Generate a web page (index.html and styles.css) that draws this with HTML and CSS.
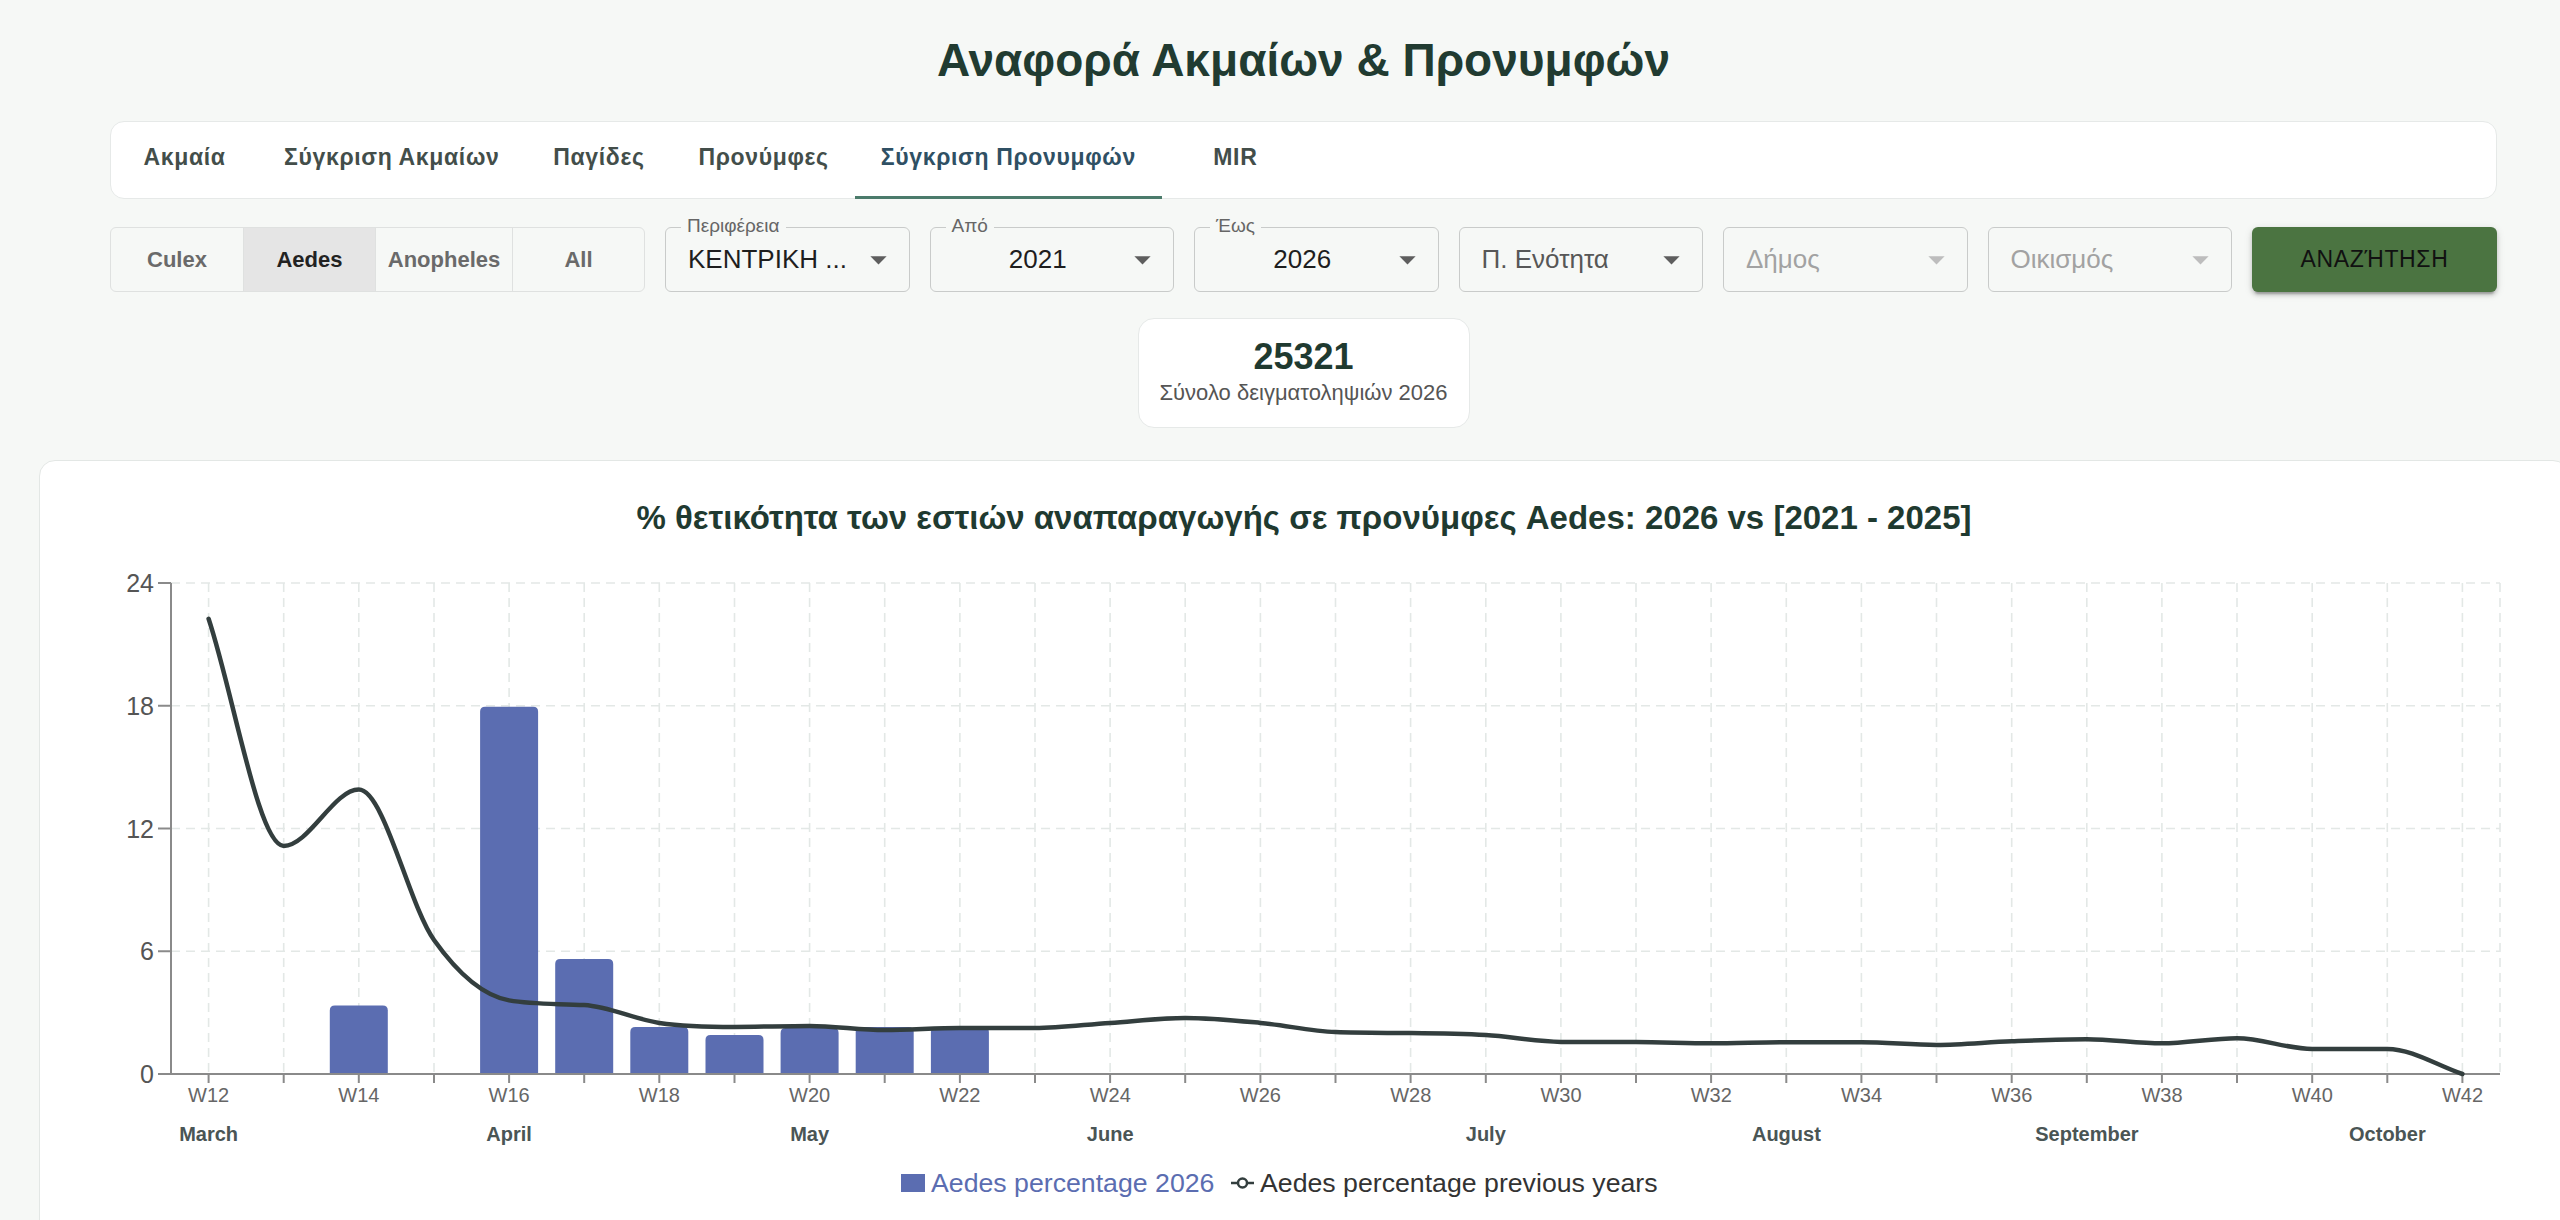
FILE: index.html
```html
<!DOCTYPE html>
<html lang="el">
<head>
<meta charset="utf-8">
<title>Αναφορά Ακμαίων &amp; Προνυμφών</title>
<link rel="stylesheet" href="styles.css">
</head>
<body>
<div class="page">
  <h1 class="page-title">Αναφορά Ακμαίων &amp; Προνυμφών</h1>

  <nav class="tabs">
    <div class="tab">Ακμαία</div>
    <div class="tab">Σύγκριση Ακμαίων</div>
    <div class="tab">Παγίδες</div>
    <div class="tab">Προνύμφες</div>
    <div class="tab active">Σύγκριση Προνυμφών</div>
    <div class="tab">MIR</div>
  </nav>

  <div class="filters">
    <div class="species">
      <div class="seg">Culex</div>
      <div class="seg selected">Aedes</div>
      <div class="seg">Anopheles</div>
      <div class="seg">All</div>
    </div>

    <div class="select">
      <span class="select-label">Περιφέρεια</span>
      <span class="select-value">ΚΕΝΤΡΙΚΗ ...</span>
      <svg class="arrow" viewBox="0 0 24 24"><path d="M7 10l5 5 5-5z"/></svg>
    </div>
    <div class="select centered">
      <span class="select-label">Από</span>
      <span class="select-value">2021</span>
      <svg class="arrow" viewBox="0 0 24 24"><path d="M7 10l5 5 5-5z"/></svg>
    </div>
    <div class="select centered">
      <span class="select-label">Έως</span>
      <span class="select-value">2026</span>
      <svg class="arrow" viewBox="0 0 24 24"><path d="M7 10l5 5 5-5z"/></svg>
    </div>
    <div class="select">
      <span class="select-value placeholder">Π. Ενότητα</span>
      <svg class="arrow" viewBox="0 0 24 24"><path d="M7 10l5 5 5-5z"/></svg>
    </div>
    <div class="select disabled">
      <span class="select-value placeholder">Δήμος</span>
      <svg class="arrow" viewBox="0 0 24 24"><path d="M7 10l5 5 5-5z"/></svg>
    </div>
    <div class="select disabled">
      <span class="select-value placeholder">Οικισμός</span>
      <svg class="arrow" viewBox="0 0 24 24"><path d="M7 10l5 5 5-5z"/></svg>
    </div>

    <button class="search" type="button">ΑΝΑΖΉΤΗΣΗ</button>
  </div>

  <div class="stats">
    <div class="stat-card">
      <div class="stat-num">25321</div>
      <div class="stat-label">Σύνολο δειγματοληψιών 2026</div>
    </div>
  </div>
</div>

<section class="chart-card">
  <h2 class="chart-title">% θετικότητα των εστιών αναπαραγωγής σε προνύμφες Aedes: 2026 vs [2021 - 2025]</h2>
  <svg id="chart" class="chart" width="2528" height="700" viewBox="0 0 2528 700">
    <g class="grid">
      <line x1="131" x2="2460" y1="23" y2="23"/>
      <line x1="131" x2="2460" y1="145.75" y2="145.75"/>
      <line x1="131" x2="2460" y1="268.5" y2="268.5"/>
      <line x1="131" x2="2460" y1="391.25" y2="391.25"/>
    </g>
    <g id="grid-v" class="grid"></g>
    <g id="bars"></g>
    <g class="axis">
      <line x1="131" x2="131" y1="23" y2="514"/>
      <line x1="118" x2="2460" y1="514" y2="514"/>
      <line x1="118" x2="131" y1="23" y2="23"/>
      <line x1="118" x2="131" y1="145.75" y2="145.75"/>
      <line x1="118" x2="131" y1="268.5" y2="268.5"/>
      <line x1="118" x2="131" y1="391.25" y2="391.25"/>
    </g>
    <g id="ticks-x" class="axis"></g>
    <path id="prev-line" class="prev-line" d=""/>

    <g class="ylab">
      <text x="114" y="32">24</text>
      <text x="114" y="154.75">18</text>
      <text x="114" y="277.5">12</text>
      <text x="114" y="400.25">6</text>
      <text x="114" y="523">0</text>
    </g>
    <g class="xlab">
      <text x="168.6" y="542">W12</text>
      <text x="318.9" y="542">W14</text>
      <text x="469.1" y="542">W16</text>
      <text x="619.4" y="542">W18</text>
      <text x="769.6" y="542">W20</text>
      <text x="919.9" y="542">W22</text>
      <text x="1070.2" y="542">W24</text>
      <text x="1220.4" y="542">W26</text>
      <text x="1370.7" y="542">W28</text>
      <text x="1521.0" y="542">W30</text>
      <text x="1671.2" y="542">W32</text>
      <text x="1821.5" y="542">W34</text>
      <text x="1971.7" y="542">W36</text>
      <text x="2122.0" y="542">W38</text>
      <text x="2272.3" y="542">W40</text>
      <text x="2422.5" y="542">W42</text>
    </g>
    <g class="month">
      <text x="168.6" y="581">March</text>
      <text x="469.1" y="581">April</text>
      <text x="769.6" y="581">May</text>
      <text x="1070.2" y="581">June</text>
      <text x="1445.8" y="581">July</text>
      <text x="1746.4" y="581">August</text>
      <text x="2046.9" y="581">September</text>
      <text x="2347.4" y="581">October</text>
    </g>
    <g class="legend">
      <rect class="bar" x="861" y="614" width="24" height="18"/>
      <text class="leg-2026" x="891" y="632">Aedes percentage 2026</text>
      <line class="leg-line" x1="1191" x2="1214" y1="623" y2="623"/>
      <circle class="leg-dot" cx="1202.5" cy="623" r="4.5"/>
      <text class="leg-prev" x="1220" y="632">Aedes percentage previous years</text>
    </g>
  </svg>
</section>

<script src="script.js"></script>
</body>
</html>
```

FILE: styles.css
```css
html {
  overflow: hidden;
}

body {
  margin: 0;
  background: #f6f8f6;
  font-family: "Liberation Sans", Arial, sans-serif;
  color: #222;
}

.page {
  margin-left: 110px;
  width: 2387px;
}

.page-title {
  margin: 33px 0 34px;
  font-size: 46px;
  line-height: 54px;
  font-weight: bold;
  text-align: center;
  color: #213b31;
}

/* Tabs */
.tabs {
  display: flex;
  height: 78px;
  box-sizing: border-box;
  background: #fff;
  border: 1px solid #e6e9e8;
  border-radius: 14px;
}

.tab {
  position: relative;
  min-width: 147px;
  padding: 0 26px 5px;
  box-sizing: border-box;
  display: flex;
  align-items: center;
  justify-content: center;
  font-size: 23px;
  font-weight: bold;
  letter-spacing: 0.65px;
  color: #434e4a;
  white-space: nowrap;
}

.tab.active {
  color: #2f5064;
}

.tab.active::after {
  content: "";
  position: absolute;
  left: 0;
  right: 0;
  bottom: -1px;
  height: 3px;
  background: #4b7b6b;
}

/* Filters */
.filters {
  display: flex;
  gap: 20px;
  margin-top: 28px;
  height: 65px;
}

.species {
  display: flex;
  width: 535px;
  flex: 0 0 535px;
  box-sizing: border-box;
  border: 1px solid #dfe1e0;
  border-radius: 6px;
  overflow: hidden;
}

.seg {
  min-width: 132px;
  padding: 0 12px;
  box-sizing: border-box;
  display: flex;
  align-items: center;
  justify-content: center;
  font-size: 22px;
  font-weight: bold;
  color: #6a6a6a;
  border-left: 1px solid #dfe1e0;
}

.seg:first-child {
  border-left: 0;
}

.seg.selected {
  background: #e5e5e5;
  color: #222;
}

.select {
  position: relative;
  flex: 1;
  display: flex;
  align-items: center;
  box-sizing: border-box;
  padding: 0 50px 0 22px;
  border: 1px solid #c9cbca;
  border-radius: 6px;
  font-size: 26px;
  color: #1e1e1e;
  white-space: nowrap;
}

.select.centered .select-value {
  flex: 1;
  text-align: center;
}

.select-label {
  position: absolute;
  left: 15px;
  top: -13px;
  padding: 0 6px;
  font-size: 19px;
  line-height: 22px;
  color: #666;
  background: #f6f8f6;
}

.select-value.placeholder {
  color: #575757;
}

.select.disabled .select-value.placeholder {
  color: #a2a2a2;
}

.arrow {
  position: absolute;
  right: 11px;
  top: 50%;
  width: 39px;
  height: 39px;
  margin-top: -20px;
  fill: #5e5e5e;
}

.select.disabled .arrow {
  fill: #bdbdbd;
}

.search {
  flex: 0 0 245px;
  height: 65px;
  border: 0;
  border-radius: 6px;
  background: #4b7441;
  color: #111;
  font-family: "Liberation Sans", Arial, sans-serif;
  font-size: 23px;
  letter-spacing: 0.65px;
  box-shadow: 0 5px 2px -3px rgba(0, 0, 0, 0.2), 0 3px 4px 0 rgba(0, 0, 0, 0.16), 0 2px 9px 0 rgba(0, 0, 0, 0.12);
}

/* Stat */
.stats {
  display: flex;
  justify-content: center;
  margin-top: 26px;
}

.stat-card {
  width: 332px;
  height: 110px;
  box-sizing: border-box;
  padding-top: 18px;
  background: #fff;
  border: 1px solid #e6e9e8;
  border-radius: 16px;
  text-align: center;
}

.stat-num {
  font-size: 36px;
  line-height: 40px;
  font-weight: bold;
  color: #1f3a30;
}

.stat-label {
  margin-top: 3px;
  font-size: 22px;
  line-height: 26px;
  color: #555;
}

/* Chart card */
.chart-card {
  margin: 32px 0 0 39px;
  width: 2530px;
  height: 820px;
  box-sizing: border-box;
  background: #fff;
  border: 1px solid #e3e7e5;
  border-radius: 16px;
}

.chart-title {
  margin: 38px 0 23px;
  font-size: 33px;
  line-height: 38px;
  font-weight: bold;
  text-align: center;
  color: #1f3a30;
}

.chart {
  display: block;
  font-family: "Liberation Sans", Arial, sans-serif;
}

.grid line {
  stroke: #e3e8e6;
  stroke-width: 1.6;
  stroke-dasharray: 9 6;
}

.axis line {
  stroke: #8a8a8a;
  stroke-width: 2;
}

.bar {
  fill: #5b6db1;
}

.prev-line {
  fill: none;
  stroke: #333e3e;
  stroke-width: 4.5;
  stroke-linejoin: round;
  stroke-linecap: round;
}

.ylab text {
  font-size: 25px;
  fill: #555;
  text-anchor: end;
}

.xlab text {
  font-size: 20px;
  fill: #666;
  text-anchor: middle;
}

.month text {
  font-size: 20px;
  font-weight: bold;
  fill: #4a5555;
  text-anchor: middle;
}

.legend text {
  font-size: 26.7px;
}

.leg-2026 {
  fill: #5b6db1;
}

.leg-prev {
  fill: #333;
}

.leg-line {
  stroke: #333e3e;
  stroke-width: 2.5;
}

.leg-dot {
  fill: #fff;
  stroke: #333e3e;
  stroke-width: 2.5;
}
```

FILE: script.js
```js
(function () {
  var NS = 'http://www.w3.org/2000/svg';
  var L = 131, R = 2460, T = 23, B = 514;
  var n = 31;
  var step = (R - L) / n;
  var unit = (B - T) / 24;

  function cx(i) { return L + (i + 0.5) * step; }
  function cy(v) { return B - v * unit; }
  function el(parent, name, attrs) {
    var e = document.createElementNS(NS, name);
    for (var k in attrs) { e.setAttribute(k, attrs[k]); }
    parent.appendChild(e);
    return e;
  }

  var gv = document.getElementById('grid-v');
  var tx = document.getElementById('ticks-x');
  var i;
  for (i = 0; i < n; i++) {
    var x = cx(i).toFixed(1);
    el(gv, 'line', { x1: x, x2: x, y1: T, y2: B });
    el(tx, 'line', { x1: x, x2: x, y1: B, y2: B + 9 });
  }
  el(gv, 'line', { x1: R, x2: R, y1: T, y2: B });

  // Aedes percentage 2026 (index 0 = W12)
  var bars = [[2, 3.35], [4, 17.95], [5, 5.62], [6, 2.3], [7, 1.9], [8, 2.25], [9, 2.3], [10, 2.3]];
  var gb = document.getElementById('bars');
  var w = 58, r = 5;
  bars.forEach(function (b) {
    var x0 = cx(b[0]) - w / 2, y0 = cy(b[1]);
    var d = 'M' + x0.toFixed(1) + ' ' + B +
      'V' + (y0 + r).toFixed(1) +
      'Q' + x0.toFixed(1) + ' ' + y0.toFixed(1) + ' ' + (x0 + r).toFixed(1) + ' ' + y0.toFixed(1) +
      'H' + (x0 + w - r).toFixed(1) +
      'Q' + (x0 + w).toFixed(1) + ' ' + y0.toFixed(1) + ' ' + (x0 + w).toFixed(1) + ' ' + (y0 + r).toFixed(1) +
      'V' + B + 'Z';
    el(gb, 'path', { d: d, 'class': 'bar' });
  });

  // Aedes percentage previous years, W12..W42
  var prev = [22.25, 11.15, 13.9, 6.55, 3.6, 3.37, 2.5, 2.3, 2.35, 2.15, 2.25, 2.25, 2.5, 2.74, 2.5, 2.05,
    2.0, 1.9, 1.57, 1.56, 1.5, 1.55, 1.55, 1.42, 1.6, 1.7, 1.5, 1.75, 1.22, 1.22, 0];
  var xs = prev.map(function (v, k) { return cx(k); });
  var ys = prev.map(function (v) { return cy(v); });
  var m = n - 1;
  var dk = [], mk = [];
  for (i = 0; i < m; i++) { dk[i] = (ys[i + 1] - ys[i]) / (xs[i + 1] - xs[i]); }
  for (i = 0; i < n; i++) {
    if (i === 0) { mk[i] = dk[0]; }
    else if (i === n - 1) { mk[i] = dk[m - 1]; }
    else if (dk[i - 1] === 0 || dk[i] === 0 || (dk[i - 1] > 0) !== (dk[i] > 0)) { mk[i] = 0; }
    else { mk[i] = (dk[i - 1] + dk[i]) / 2; }
  }
  for (i = 0; i < m; i++) {
    if (dk[i] === 0) { mk[i] = 0; mk[i + 1] = 0; continue; }
    var a = mk[i] / dk[i], bb = mk[i + 1] / dk[i], s = a * a + bb * bb;
    if (s > 9) {
      var t = 3 / Math.sqrt(s);
      mk[i] = a * t * dk[i];
      mk[i + 1] = bb * t * dk[i];
    }
  }
  var path = 'M' + xs[0].toFixed(1) + ' ' + ys[0].toFixed(1);
  for (i = 0; i < m; i++) {
    var dx = (xs[i + 1] - xs[i]) / 3;
    path += 'C' + (xs[i] + dx).toFixed(1) + ' ' + (ys[i] + dx * mk[i]).toFixed(1) + ' ' +
      (xs[i + 1] - dx).toFixed(1) + ' ' + (ys[i + 1] - dx * mk[i + 1]).toFixed(1) + ' ' +
      xs[i + 1].toFixed(1) + ' ' + ys[i + 1].toFixed(1);
  }
  document.getElementById('prev-line').setAttribute('d', path);
})();
```
